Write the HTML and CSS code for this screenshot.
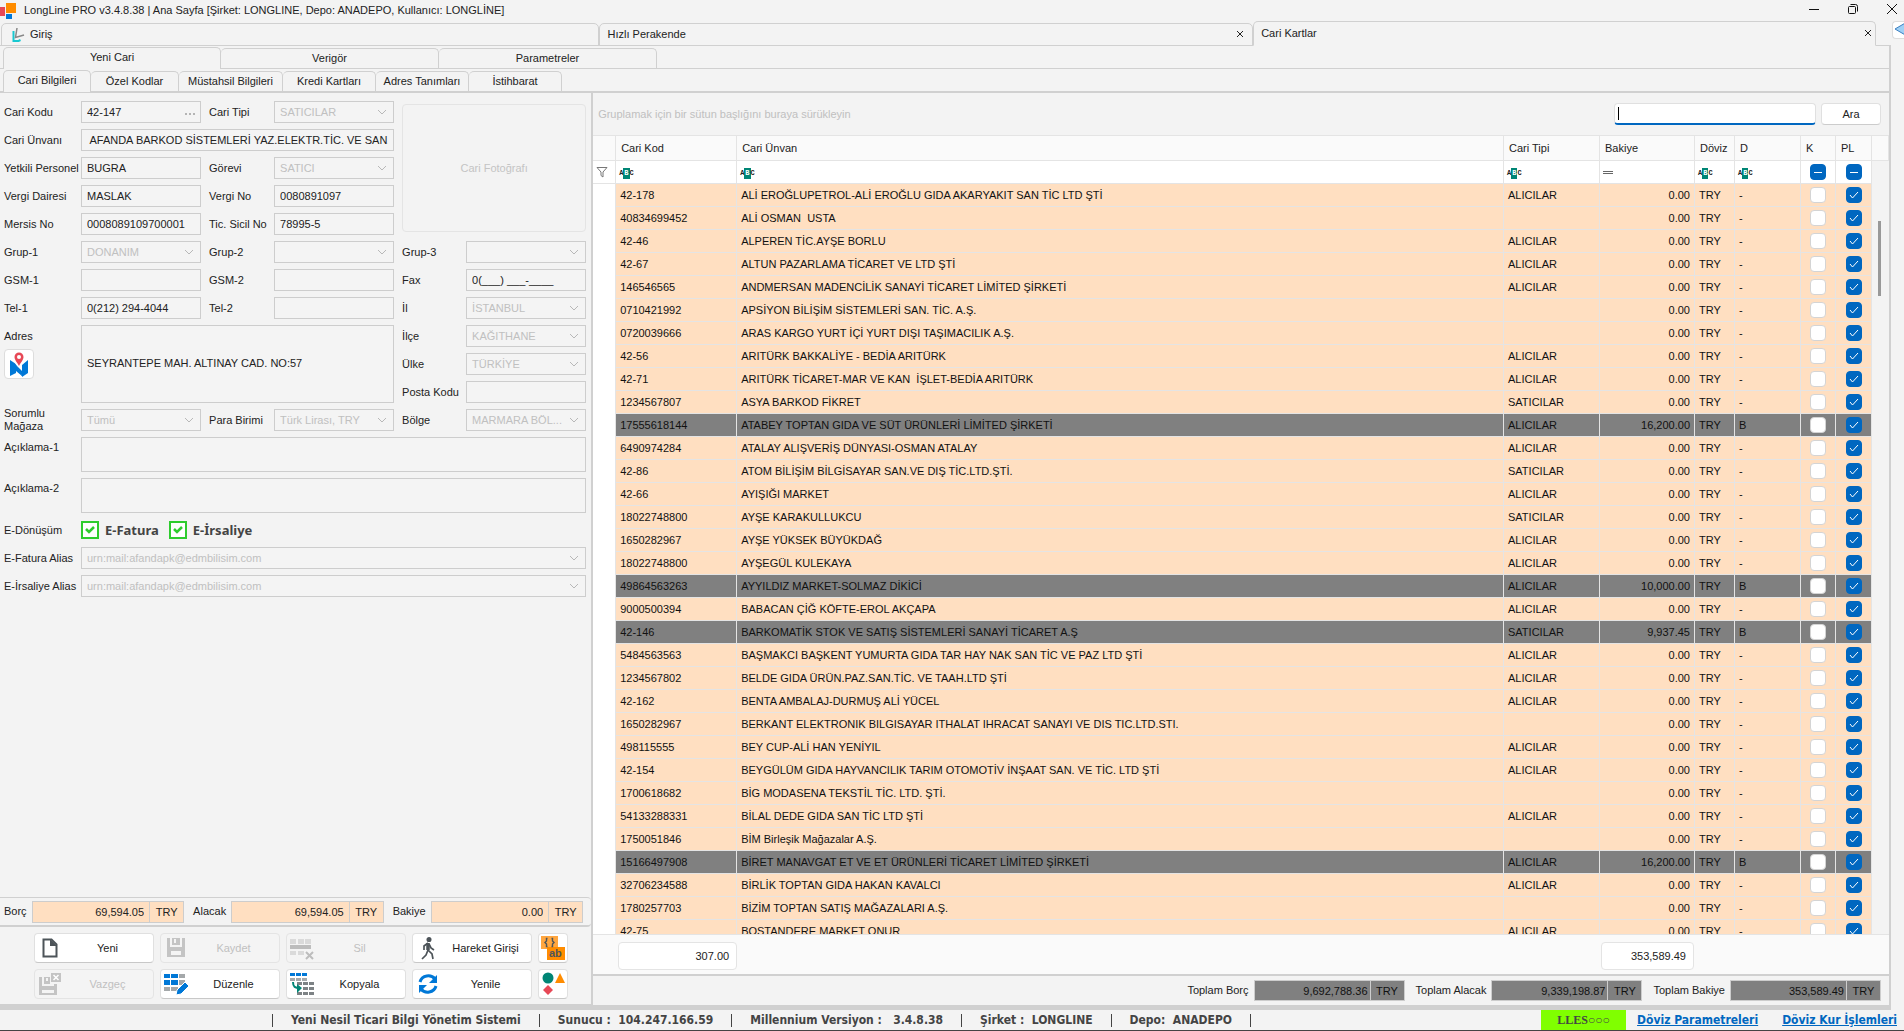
FILE: index.html
```html
<!DOCTYPE html>
<html lang="tr">
<head>
    <meta charset="UTF-8">
    <title>LongLine PRO</title>
    <link rel="stylesheet" href="styles.css">
</head>
<body>
<header class="titlebar">
    <svg class="app-logo" width="16" height="18" viewBox="0 0 16 18">
        <rect x="0" y="5" width="5" height="9" fill="#e74856"/>
        <rect x="6" y="1" width="10" height="10" fill="#ff8c00"/>
        <rect x="6" y="12" width="6" height="5" fill="#0078d7"/>
    </svg>
    <h1 class="app-title">LongLine PRO v3.4.8.38 | Ana Sayfa [Şirket: LONGLINE, Depo: ANADEPO, Kullanıcı: LONGLİNE]</h1>
    <button class="win-btn" aria-label="Simge durumuna küçült"><svg width="12" height="12" viewBox="0 0 12 12"><path d="M1 6.5h10" stroke="#111"/></svg></button>
    <button class="win-btn" aria-label="Önceki boyut"><svg width="12" height="12" viewBox="0 0 12 12" fill="none" stroke="#111"><rect x="1.5" y="3.5" width="7" height="7" rx="1"/><path d="M3.5 1.5h5a2 2 0 0 1 2 2v5"/></svg></button>
    <button class="win-btn" aria-label="Kapat"><svg width="12" height="12" viewBox="0 0 12 12"><path d="M1 1l10 10M11 1L1 11" stroke="#111"/></svg></button>
</header>

<nav class="doc-tabs">
    <div class="doc-tab doc-home">
        <svg width="13" height="15" viewBox="0 0 13 15" fill="none"><path d="M1.5 4v10h5l2-1" stroke="#18c8d0" stroke-width="2"/><path d="M5 1L3.500 10.500L12 8" stroke="#888" stroke-width="1.500"/></svg>
        <a href="#giris">Giriş</a>
    </div>
    <div class="doc-tab doc-retail">
        <a href="#perakende">Hızlı Perakende</a>
        <button class="close" aria-label="Hızlı Perakende kapat"><svg width="8" height="8" viewBox="0 0 8 8"><path d="M1 1l6 6M7 1L1 7" stroke="#222"/></svg></button>
    </div>
    <div class="doc-tab doc-cards active">
        <a href="#cari">Cari Kartlar</a>
        <button class="close" aria-label="Cari Kartlar kapat"><svg width="8" height="8" viewBox="0 0 8 8"><path d="M1 1l6 6M7 1L1 7" stroke="#222"/></svg></button>
    </div>
    <button class="scroll-btn" aria-label="Sekmeler"><svg width="14" height="14" viewBox="0 0 14 14"><path d="M2 7L14 0v14z" fill="#9fd0f5" stroke="#3b7fc0"/></svg></button>
</nav>

<main class="page">
    <nav class="tabs tabs-main">
        <a class="active" href="#yeni">Yeni Cari</a>
        <a href="#verigor">Verigör</a>
        <a href="#parametreler">Parametreler</a>
    </nav>
    <nav class="tabs tabs-sub">
        <a class="active" href="#bilgi">Cari Bilgileri</a>
        <a href="#ozel">Özel Kodlar</a>
        <a class="wide" href="#mustahsil">Müstahsil Bilgileri</a>
        <a href="#kredi">Kredi Kartları</a>
        <a href="#adres">Adres Tanımları</a>
        <a href="#istihbarat">İstihbarat</a>
    </nav>

    <div class="panes">
        <section class="card-pane">
            <form class="card-form">
                <div class="photo">Cari Fotoğrafı</div>

                <label for="kod">Cari Kodu</label>
                <div class="field-more">
                    <input id="kod" type="text" value="42-147">
                    <button type="button" aria-label="Cari seç"><svg width="11" height="3" viewBox="0 0 11 3" fill="#b4b4b4"><rect width="2" height="2" y="1"/><rect x="4" width="2" height="2" y="1"/><rect x="8" width="2" height="2" y="1"/></svg></button>
                </div>
                <label for="tip">Cari Tipi</label>
                <select id="tip" disabled><option>SATICILAR</option></select>

                <label for="unvan">Cari Ünvanı</label>
                <input id="unvan" class="span-3" type="text" value=" AFANDA BARKOD SİSTEMLERİ YAZ.ELEKTR.TİC. VE SAN.A.Ş.">

                <label for="personel">Yetkili Personel</label>
                <input id="personel" type="text" value="BUGRA">
                <label for="gorev">Görevi</label>
                <select id="gorev" disabled><option>SATICI</option></select>

                <label for="vdaire">Vergi Dairesi</label>
                <input id="vdaire" type="text" value="MASLAK">
                <label for="vno">Vergi No</label>
                <input id="vno" type="text" value="0080891097">

                <label for="mersis">Mersis No</label>
                <input id="mersis" type="text" value="0008089109700001">
                <label for="sicil">Tic. Sicil No</label>
                <input id="sicil" type="text" value="78995-5">

                <label for="grup1">Grup-1</label>
                <select id="grup1" disabled><option>DONANIM</option></select>
                <label for="grup2">Grup-2</label>
                <select id="grup2" disabled><option></option></select>
                <label for="grup3">Grup-3</label>
                <select id="grup3" disabled><option></option></select>

                <label for="gsm1">GSM-1</label>
                <input id="gsm1" type="text">
                <label for="gsm2">GSM-2</label>
                <input id="gsm2" type="text">
                <label for="fax">Fax</label>
                <input id="fax" type="text" value="0(___) ___-____">

                <label for="tel1">Tel-1</label>
                <input id="tel1" type="text" value="0(212) 294-4044">
                <label for="tel2">Tel-2</label>
                <input id="tel2" type="text">
                <label for="il">İl</label>
                <select id="il" disabled><option>İSTANBUL</option></select>

                <label for="adres">Adres</label>
                <textarea id="adres" class="address">SEYRANTEPE MAH. ALTINAY CAD. NO:57</textarea>
                <label for="ilce">İlçe</label>
                <select id="ilce" disabled><option>KAĞITHANE</option></select>

                <button type="button" class="map-btn" aria-label="Haritada göster">
                    <svg width="20" height="25" viewBox="0 0 20 25">
                        <path d="M1 8l6 4v9l-6 3zM7 12l6 11v1l-6-5zM13 13l6-5v13l-6 4z" fill="#0078d7"/>
                        <path d="M6 11l7 12V12z" fill="#fff"/><path d="M6 12l7 12v-5z" fill="#0078d7"/>
                        <path d="M10 14C8 10 5.500 8 5.500 5a4.500 4.500 0 0 1 9 0c0 3-2.500 5-4.500 9z" fill="#e74856"/>
                        <circle cx="10" cy="5" r="2" fill="#fff"/>
                    </svg>
                </button>
                <label class="third" for="ulke">Ülke</label>
                <select id="ulke" disabled><option>TÜRKİYE</option></select>

                <label class="third" for="posta">Posta Kodu</label>
                <input id="posta" type="text">

                <label for="magaza">Sorumlu<br>Mağaza</label>
                <select id="magaza" disabled><option>Tümü</option></select>
                <label for="para">Para Birimi</label>
                <select id="para" disabled><option>Türk Lirası, TRY</option></select>
                <label for="bolge">Bölge</label>
                <select id="bolge" disabled><option>MARMARA BÖL...</option></select>

                <label class="top" for="acik1">Açıklama-1</label>
                <textarea id="acik1" class="span-all"></textarea>
                <label class="top" for="acik2">Açıklama-2</label>
                <textarea id="acik2" class="span-all"></textarea>

                <span>E-Dönüşüm</span>
                <div class="span-all e-checks">
                    <label><input type="checkbox" checked> E-Fatura</label>
                    <label><input type="checkbox" checked> E-İrsaliye</label>
                </div>

                <label for="alias1">E-Fatura Alias</label>
                <select id="alias1" class="span-all" disabled><option>urn:mail:afandapk@edmbilisim.com</option></select>
                <label for="alias2">E-İrsaliye Alias</label>
                <select id="alias2" class="span-all" disabled><option>urn:mail:afandapk@edmbilisim.com</option></select>
            </form>

            <div class="balance">
                <label for="borc">Borç</label>
                <input id="borc" readonly value="69,594.05"><span class="cur">TRY</span>
                <label for="alacak">Alacak</label>
                <input id="alacak" readonly value="69,594.05"><span class="cur">TRY</span>
                <label for="bakiye">Bakiye</label>
                <input id="bakiye" readonly value="0.00"><span class="cur">TRY</span>
            </div>

            <div class="actions">
                <button><svg width="24" height="24" viewBox="0 0 24 24"><path d="M5.500 3.500h8l5 5v12h-13z" fill="none" stroke="#4d5459" stroke-width="2"/><path d="M12 3v7h7z" fill="#4d5459"/></svg><span>Yeni</span></button>
                <button disabled><svg width="24" height="24" viewBox="0 0 24 24" fill="#c4c4c4"><path d="M3 2h3v9h12V2h3v19H3zm4 13v4h10v-4z" fill-rule="evenodd"/><path d="M8 2h8v7H8zm2 1v4h2V3z" fill-rule="evenodd"/></svg><span>Kaydet</span></button>
                <button disabled><svg width="24" height="24" viewBox="0 0 24 24"><path d="M0 3h6v5H0zM8 3h6v5H8zM15 3h6v5h-6zM0 15h6v4H0zM8 15h6v4H8z" fill="#dadada"/><path d="M0 9h21v4H0z" fill="#bdbdbd"/><path d="M16 16l7 7M23 16l-7 7" stroke="#bdbdbd" stroke-width="2"/></svg><span>Sil</span></button>
                <button><svg width="24" height="24" viewBox="0 0 24 24" fill="none" stroke="#4d5459" stroke-width="1.700"><circle cx="13" cy="3.500" r="1.700" fill="#4d5459"/><path d="M12 7v7l4 4 1 5M12 14l-2 5-4 4"/><path d="M12 7l-4 3v4M13 8l2 4 3 2"/><path d="M12 7v7" stroke-width="3.500"/></svg><span>Hareket Girişi</span></button>
                <button class="square" aria-label="Metin ayarları"><svg width="26" height="26" viewBox="0 0 26 26"><rect x="1" y="1" width="17" height="13" fill="#ffa63f"/><rect x="7" y="12" width="18" height="13" fill="#ff8c00"/><path d="M7.500 3.500H6.500V6L5 7.500 6.500 9v2.500h1M11.500 3.500h1V6L14 7.500 12.500 9v2.500h-1" fill="none" stroke="#4d5459" stroke-width="1.400"/><text x="9" y="22" class="ab">ab</text></svg></button>
                <button disabled><svg width="24" height="24" viewBox="0 0 24 24" fill="#c4c4c4"><path d="M1 5h3v9h12v-2h3v11H1zm3 13v3h12v-3z" fill-rule="evenodd"/><path d="M6 5h6v7H6zm2 1v3h2V6z" fill-rule="evenodd"/><path d="M13 1h10v9H13z"/><path d="M15.500 3l5 5M20.500 3l-5 5" stroke="#fff" stroke-width="1.500"/></svg><span>Vazgeç</span></button>
                <button><svg width="24" height="24" viewBox="0 0 24 24"><path d="M0 2h6v4H0zM7 2h7v4H7zM0 8h6v5H0zM7 8h7v5H7z" fill="#0078d7"/><path d="M15 2h6v4h-6zM15 8h6v5h-6zM0 15h6v4H0zM7 15h7v4H7z" fill="#a4a8aa"/><path d="M12 23l1-5 8-8 4 4-8 8z" fill="#0078d7" stroke="#fff"/></svg><span>Düzenle</span></button>
                <button><svg width="24" height="24" viewBox="0 0 24 24"><path d="M0 1h5v3H0zM6 1h5v3H6zM12 1h5v3h-5z" fill="#0078d7"/><path d="M0 6h5v3H0zM6 6h5v3H6zM12 6h5v3h-5z" fill="#a4a8aa"/><path d="M7 10h5v3H7zM13 10h5v3h-5zM19 10h5v3h-5zM13 15h5v3h-5zM19 15h5v3h-5zM7 20h5v3H7zM13 20h5v3h-5zM19 20h5v3h-5z" fill="#7d8285"/><path d="M3 10c0 5 2 6 7 6" fill="none" stroke="#008575" stroke-width="2"/><path d="M7 12l5 4-5 5z" fill="#008575"/></svg><span>Kopyala</span></button>
                <button><svg width="24" height="24" viewBox="0 0 24 24" fill="none" stroke="#0078d7" stroke-width="3"><path d="M4 10c2-7 11-8 15-3M20 14c-2 7-11 8-15 3"/><path d="M21 3v8h-8zM3 21v-8h8z" fill="#0078d7" stroke="none"/></svg><span>Yenile</span></button>
                <button class="square" aria-label="Şekiller"><svg width="26" height="26" viewBox="0 0 26 26"><circle cx="8" cy="7" r="5.500" fill="#008575"/><path d="M20 2l5 10H15z" fill="#ff8c00"/><path d="M8 14l5 5-5 5-5-5z" fill="#e74856"/></svg></button>
            </div>
        </section>

        <section class="list-pane">
            <div class="group-bar">
                <span>Gruplamak için bir sütun başlığını buraya sürükleyin</span>
                <input class="search" type="text" aria-label="Ara">
                <button class="search-btn">Ara</button>
            </div>
            <div class="grid-wrap">
                <table class="grid">
                    <colgroup>
                        <col class="c-ind"><col class="c-kod"><col><col class="c-tip"><col class="c-bakiye">
                        <col class="c-doviz"><col class="c-d"><col class="c-k"><col class="c-pl"><col class="c-bar">
                    </colgroup>
                    <thead>
                    <tr class="heads">
                        <th></th><th>Cari Kod</th><th>Cari Ünvan</th><th>Cari Tipi</th><th>Bakiye</th>
                        <th>Döviz</th><th>D</th><th>K</th><th>PL</th><th></th>
                    </tr>
                    <tr class="filters">
                        <td class="funnel"><svg width="12" height="12" viewBox="0 0 12 12"><path d="M1 1.500h10L7 6v5L5 9.500V6z" fill="none" stroke="#777"/></svg></td>
                        <td><span class="abc">A<b>B</b>C</span></td>
                        <td><span class="abc">A<b>B</b>C</span></td>
                        <td><span class="abc">A<b>B</b>C</span></td>
                        <td><svg class="equals" width="10" height="5" viewBox="0 0 10 5"><path d="M0 1.500h10M0 3.500h10" stroke="#666"/></svg></td>
                        <td><span class="abc">A<b>B</b>C</span></td>
                        <td><span class="abc">A<b>B</b>C</span></td>
                        <td class="chk"><input class="mixed" type="checkbox" aria-label="K filtresi"></td>
                        <td class="chk"><input class="mixed" type="checkbox" aria-label="PL filtresi"></td>
                        <td class="bar"></td>
                    </tr>
                    </thead>
                    <tbody id="rows"></tbody>
                </table>
                <div class="scroll-thumb"></div>
            </div>
            <div class="summary">
                <output class="sum-count">307.00</output>
                <output class="sum-balance">353,589.49</output>
            </div>
            <div class="totals">
                <label for="tborc">Toplam Borç</label>
                <input id="tborc" readonly value="9,692,788.36"><span class="cur">TRY</span>
                <label for="talacak">Toplam Alacak</label>
                <input id="talacak" readonly value="9,339,198.87"><span class="cur">TRY</span>
                <label for="tbakiye">Toplam Bakiye</label>
                <input id="tbakiye" readonly value="353,589.49"><span class="cur">TRY</span>
            </div>
        </section>
    </div>
</main>

<footer class="status">
    <i></i><span>Yeni Nesil Ticari Bilgi Yönetim Sistemi</span>
    <i></i><span>Sunucu :&nbsp; 104.247.166.59</span>
    <i></i><span>Millennium Versiyon :&nbsp;&nbsp; 3.4.8.38</span>
    <i></i><span>Şirket :&nbsp; LONGLINE</span>
    <i></i><span>Depo:&nbsp; ANADEPO</span>
    <i></i>
    <strong class="lles">LLES○○○</strong>
    <a href="#doviz">Döviz Parametreleri</a>
    <a href="#kur">Döviz Kur İşlemleri</a>
</footer>
<script src="script.js"></script>
</body>
</html>
```

FILE: styles.css
```css
* {
    box-sizing: border-box;
}

body {
    margin: 0;
    height: 100vh;
    display: flex;
    flex-direction: column;
    overflow: hidden;
    background-color: #f3f3f3;
    border-bottom: 1px solid #444;
    color: #222;
    font: 11px/13px "Liberation Sans", Arial, sans-serif;
}

input, select, textarea, button {
    font: inherit;
    color: inherit;
    margin: 0;
}

button {
    padding: 0;
    border: 0;
    background: none;
}

a {
    color: inherit;
    text-decoration: none;
}

/* title bar */
.titlebar {
    display: flex;
    align-items: center;
    height: 21px;
}

.app-title {
    flex: 1;
    margin: 0 0 0 8px;
    font-size: 11px;
    font-weight: normal;
}

.win-btn {
    width: 42px;
    height: 20px;
    text-align: center;
}

.win-btn:first-of-type {
    margin-right: -3px;
}

.win-btn:last-child {
    width: 36px;
    margin-right: -6px;
}

/* document tabs */
.doc-tabs {
    display: flex;
    align-items: flex-end;
    height: 25px;
    padding-left: 1px;
    position: relative;
}

.doc-tab {
    display: flex;
    align-items: center;
    justify-content: space-between;
    height: 23px;
    padding: 0 8px 0 10px;
    border: 1px solid #d0d0d0;
    border-radius: 5px 5px 0 0;
}

.doc-tab.active {
    height: 25px;
    border-bottom-color: #f3f3f3;
}

.doc-home {
    flex: 0 0 31.4%;
    justify-content: flex-start;
    gap: 5px;
}

.doc-retail {
    flex: 0 0 34.4%;
    padding-left: 8px;
}

.doc-cards {
    flex: 1;
    padding: 0 7px;
    margin-right: 16px;
}

.doc-cards .close {
    margin-right: -4px;
}

.close {
    width: 9px;
    height: 14px;
}

.scroll-btn {
    width: 12px;
    height: 18px;
    margin-bottom: 7px;
    overflow: hidden;
    background-color: #fff;
    border: 1px solid #ddd;
    border-right: 0;
    border-radius: 4px 0 0 4px;
}

/* page and inner tabs */
.page {
    flex: 1;
    min-height: 0;
    display: flex;
    flex-direction: column;
    margin-right: 13px;
    border-top: 1px solid #d0d0d0;
    border-right: 2px solid #d0d0d0;
    margin-top: -1px;
}

.tabs {
    display: flex;
    align-items: flex-end;
    padding-left: 3px;
    border-bottom: 1px solid #d0d0d0;
    height: 23px;
}

.tabs a {
    height: 20px;
    line-height: 18px;
    border: 1px solid #d0d0d0;
    border-left-width: 0;
    border-bottom: 0;
    border-radius: 5px 5px 0 0;
    text-align: center;
}

.tabs a.active {
    height: 22px;
    border-left-width: 1px;
    background-color: #f3f3f3;
    margin-bottom: -1px;
}

.tabs-main a {
    flex: 0 0 218px;
}

.tabs-sub {
    border-bottom-width: 2px;
    height: 24px;
}

.tabs-sub a {
    flex: 0 0 93px;
}

.tabs-sub a:first-child, .tabs-sub a:nth-child(2) {
    flex-basis: 88px;
}

.tabs-sub a.wide {
    flex-basis: 104px;
}

.panes {
    flex: 1;
    min-height: 0;
    display: flex;
    border-bottom: 5px solid #d0d0d0;
}

/* customer card */
.card-pane {
    flex: 0 0 31.4%;
    min-width: 0;
    display: flex;
    flex-direction: column;
    border-right: 2px solid #d0d0d0;
}

.card-form {
    flex: 1;
    display: grid;
    grid-template-columns: 69px minmax(0, 1fr) 57px minmax(0, 1fr) 56px minmax(0, 1fr);
    grid-template-rows: repeat(12, 22px) 35px 35px repeat(3, 22px);
    gap: 6px 8px;
    align-items: center;
    align-content: start;
    padding: 8px 5px 0 4px;
}

.card-form > label, .card-form > span {
    white-space: nowrap;
}

.card-form input[type=text], .card-form select, .card-form textarea {
    width: 100%;
    min-width: 0;
    height: 22px;
    padding: 0 5px;
    background-color: #f4f4f4;
    border: 1px solid #cdcdcd;
    border-radius: 0;
    outline: 0;
}

.card-form select {
    appearance: none;
    padding-right: 22px;
    color: #c0c0c0;
    opacity: 1;
    text-overflow: ellipsis;
    background-image: url("data:image/svg+xml,%3Csvg xmlns='http://www.w3.org/2000/svg' width='10' height='6'%3E%3Cpath d='M1 1l4 4 4-4' fill='none' stroke='%23b8b8b8'/%3E%3C/svg%3E");
    background-repeat: no-repeat;
    background-position: right 6px center;
}

.card-form textarea {
    display: block;
    height: 100%;
    resize: none;
}

.card-form .address {
    grid-column: span 3;
    grid-row: span 3;
    padding-top: 31px;
}

.span-3 {
    grid-column: span 3;
}

.span-all {
    grid-column: span 5;
}

.third {
    grid-column: 5;
}

.card-form .top {
    align-self: start;
    padding-top: 4px;
}

.photo {
    grid-column: 5 / 7;
    grid-row: 1 / 6;
    height: 128px;
    display: flex;
    align-items: center;
    justify-content: center;
    border: 1px solid #e4e4e4;
    border-radius: 4px;
    color: #c4c4c4;
}

.field-more {
    position: relative;
}

.field-more button {
    position: absolute;
    right: 5px;
    top: 0;
    height: 20px;
}

.map-btn {
    width: 30px;
    height: 30px;
    background-color: #fff;
    border: 1px solid #ddd;
    border-radius: 4px;
}

.map-btn svg {
    display: block;
    margin: 1px auto;
}

.e-checks {
    display: flex;
    gap: 10px;
    color: #444;
    font: bold 13px/18px "Noto Sans", sans-serif;
}

.e-checks label {
    display: flex;
    align-items: center;
    gap: 6px;
}

.e-checks input {
    appearance: none;
    width: 18px;
    height: 18px;
    border: 2px solid #2ecc2e;
    background: #fff url("data:image/svg+xml,%3Csvg xmlns='http://www.w3.org/2000/svg' width='10' height='8'%3E%3Cpath d='M1 3l3 3 5-5' fill='none' stroke='%232ecc2e' stroke-width='2.500'/%3E%3C/svg%3E") center no-repeat;
}

.balance, .totals {
    display: flex;
    align-items: center;
}

.balance {
    height: 30px;
    padding: 0 8px 0 4px;
    border-top: 1px solid #d0d0d0;
    border-bottom: 2px solid #d0d0d0;
    border-radius: 0 4px 4px 0;
}

.balance label, .totals label {
    margin: 0 5px 0 9px;
    white-space: nowrap;
}

.balance label:first-child {
    margin-left: 0;
}

.balance input, .totals input {
    flex: 1;
    min-width: 0;
    height: 22px;
    padding: 0 5px;
    border: 1px solid #cdcdcd;
    background-color: #ffdfc1;
    text-align: right;
    outline: 0;
}

.cur {
    width: 34px;
    height: 22px;
    line-height: 20px;
    border: 1px solid #cdcdcd;
    border-left: 0;
    background-color: #ffdfc1;
    text-align: center;
}

.actions {
    display: grid;
    grid-template-columns: repeat(4, 120px) 30px;
    gap: 6px;
    padding: 6px 0 5px 34px;
    border-bottom: 1px solid #d0d0d0;
}

.actions button {
    display: flex;
    align-items: center;
    height: 30px;
    padding-left: 2px;
    background-color: #fff;
    border: 1px solid #e0e0e0;
    border-bottom-color: #c8c8c8;
    border-radius: 4px;
}

.actions button:disabled {
    background-color: #f4f4f4;
    border-color: #e4e4e4;
    color: #c0c0c0;
}

.actions svg {
    flex: none;
    margin-left: 1px;
}

.actions button span {
    flex: 1;
    text-align: center;
}

.actions .square {
    padding: 0;
}

.ab {
    font: bold 11px "Liberation Sans", Arial, sans-serif;
    fill: #4d5459;
}

/* customer list */
.list-pane {
    flex: 1;
    min-width: 0;
    display: flex;
    flex-direction: column;
}

.group-bar {
    display: flex;
    align-items: center;
    gap: 5px;
    height: 42px;
    padding: 0 8px 0 5px;
}

.group-bar span {
    flex: 1;
    color: #c0c0c0;
}

.search {
    width: 202px;
    height: 22px;
    border: 1px solid #e0e0e0;
    border-bottom: 2px solid #0067c0;
    border-radius: 4px;
    background: #fff linear-gradient(#000, #000) 3px 3px / 1px 13px no-repeat;
    outline: 0;
}

.search-btn {
    width: 60px;
    height: 22px;
    background-color: #fff;
    border: 1px solid #e0e0e0;
    border-bottom-color: #ccc;
    border-radius: 4px;
}

.grid-wrap {
    flex: 1;
    min-height: 0;
    overflow: hidden;
    position: relative;
}

.grid {
    width: 100%;
    table-layout: fixed;
    border-collapse: separate;
    border-spacing: 0;
}

.c-ind { width: 23px; }
.c-kod { width: 121px; }
.c-tip { width: 96px; }
.c-bakiye { width: 95px; }
.c-doviz { width: 40px; }
.c-d { width: 66px; }
.c-k { width: 35px; }
.c-pl { width: 36px; }
.c-bar { width: 17px; }

.grid th, .grid td {
    padding: 0 4px;
    border-right: 1px solid #e4e4e4;
    border-bottom: 1px solid #e4e4e4;
    white-space: pre;
    text-align: left;
    font-weight: normal;
}

.grid th {
    height: 26px;
    padding-left: 5px;
    border-top: 1px solid #e4e4e4;
    background-color: #fafafa;
}

.grid td {
    height: 23px;
}

.grid .filters td {
    background-color: #fff;
    padding-left: 3px;
}

.grid tbody td {
    background-color: #ffdfc1;
    color: #111;
}

.grid tbody .debt td {
    background-color: #808080;
}

.grid tbody tr .ind {
    background-color: #fff;
    border-bottom: 0;
}

.grid tbody tr .bar, .grid .filters .bar {
    background-color: #f3f3f3;
    border: 0;
}

.grid .num {
    text-align: right;
}

.grid .funnel {
    padding-left: 5px;
}

.grid .funnel svg, .grid .equals {
    display: block;
}

.grid .chk, .grid .filters .chk {
    padding: 0;
    text-align: center;
}

.chk input {
    appearance: none;
    display: block;
    width: 16px;
    height: 16px;
    margin: 0 auto;
    background-color: #fff;
    border: 1px solid #d4d4d4;
    border-radius: 4px;
}

.chk input:checked, .chk .mixed {
    border-color: #0067c0;
    background: #0067c0 url("data:image/svg+xml,%3Csvg xmlns='http://www.w3.org/2000/svg' width='10' height='8'%3E%3Cpath d='M1 4l2.500 3L9 1' fill='none' stroke='white'/%3E%3C/svg%3E") center no-repeat;
}

.chk .mixed {
    background-image: linear-gradient(#fff, #fff);
    background-size: 8px 1px;
}

.abc {
    display: inline-flex;
    align-items: center;
    height: 11px;
    font: bold 7px/11px "Liberation Mono", monospace;
}

.abc b {
    padding: 0 1px;
    background-color: #008575;
    color: #fff;
}

.scroll-thumb {
    position: absolute;
    right: 8px;
    top: 86px;
    width: 3px;
    height: 75px;
    background-color: #999;
}

.summary {
    display: flex;
    justify-content: space-between;
    height: 42px;
    padding: 7px 195px 0 25px;
    background-color: #fafafa;
    border-top: 1px solid #e4e4e4;
    border-bottom: 2px solid #d0d0d0;
}

.summary output {
    width: 119px;
    height: 28px;
    padding-right: 7px;
    line-height: 26px;
    background-color: #fff;
    border: 1px solid #e4e4e4;
    border-radius: 4px;
    text-align: right;
}

.summary .sum-balance {
    width: 93px;
}

.totals {
    justify-content: flex-end;
    height: 29px;
    padding-right: 8px;
}

.totals input, .totals .cur {
    background-color: #808080;
    color: #111;
    height: 21px;
}

.totals input {
    flex: none;
    width: 117px;
    padding: 0 2px;
}

.totals label {
    margin-left: 11px;
}

/* status bar */
.status {
    display: flex;
    align-items: center;
    height: 20px;
    padding: 0 7px 0 272px;
    color: #444;
    font: bold 12px/14px "DejaVu Sans Condensed", "Noto Sans", sans-serif;
    white-space: nowrap;
}

.status i {
    width: 1px;
    height: 13px;
    margin-right: 18px;
    background-color: #444;
}

.status span {
    margin-right: 18px;
}

.status .lles {
    width: 85px;
    height: 20px;
    margin-left: auto;
    line-height: 20px;
    background-color: #80ff00;
    text-align: center;
    font-family: "Liberation Serif", serif;
}

.status a {
    margin-left: 11px;
    color: #0067c0;
    text-decoration: underline;
}

.status a:last-child {
    margin-left: 24px;
}
```

FILE: script.js
```js
// kod, ünvan, tip (A: alıcı, S: satıcı), bakiye
var rows = [
    ["42-178", "ALİ EROĞLUPETROL-ALİ EROĞLU GIDA AKARYAKIT SAN TİC LTD ŞTİ", "A"],
    ["40834699452", "ALİ OSMAN  USTA", ""],
    ["42-46", "ALPEREN TİC.AYŞE BORLU", "A"],
    ["42-67", "ALTUN PAZARLAMA TİCARET VE LTD ŞTİ", "A"],
    ["146546565", "ANDMERSAN MADENCİLİK SANAYİ TİCARET LİMİTED ŞİRKETİ", "A"],
    ["0710421992", "APSİYON BİLİŞİM SİSTEMLERİ SAN. TİC. A.Ş.", ""],
    ["0720039666", "ARAS KARGO YURT İÇİ YURT DIŞI TAŞIMACILIK A.Ş.", ""],
    ["42-56", "ARITÜRK BAKKALİYE - BEDİA ARITÜRK", "A"],
    ["42-71", "ARITÜRK TİCARET-MAR VE KAN  İŞLET-BEDİA ARITÜRK", "A"],
    ["1234567807", "ASYA BARKOD FİKRET", "S"],
    ["17555618144", "ATABEY TOPTAN GIDA VE SÜT ÜRÜNLERİ LİMİTED ŞİRKETİ", "A", "16,200.00"],
    ["6490974284", "ATALAY ALIŞVERİŞ DÜNYASI-OSMAN ATALAY", "A"],
    ["42-86", "ATOM BİLİŞİM BİLGİSAYAR SAN.VE DIŞ TİC.LTD.ŞTİ.", "S"],
    ["42-66", "AYIŞIĞI MARKET", "A"],
    ["18022748800", "AYŞE KARAKULLUKCU", "S"],
    ["1650282967", "AYŞE YÜKSEK BÜYÜKDAĞ", "A"],
    ["18022748800", "AYŞEGÜL KULEKAYA", "A"],
    ["49864563263", "AYYILDIZ MARKET-SOLMAZ DİKİCİ", "A", "10,000.00"],
    ["9000500394", "BABACAN ÇİĞ KÖFTE-EROL AKÇAPA", "A"],
    ["42-146", "BARKOMATİK STOK VE SATIŞ SİSTEMLERİ SANAYİ TİCARET A.Ş", "S", "9,937.45"],
    ["5484563563", "BAŞMAKCI BAŞKENT YUMURTA GIDA TAR HAY NAK SAN TİC VE PAZ LTD ŞTİ", "A"],
    ["1234567802", "BELDE GIDA ÜRÜN.PAZ.SAN.TİC. VE TAAH.LTD ŞTİ", "A"],
    ["42-162", "BENTA AMBALAJ-DURMUŞ ALİ YÜCEL", "A"],
    ["1650282967", "BERKANT ELEKTRONIK BILGISAYAR ITHALAT IHRACAT SANAYI VE DIS TIC.LTD.STI.", ""],
    ["498115555", "BEY CUP-ALİ HAN YENİYIL", "A"],
    ["42-154", "BEYGÜLÜM GIDA HAYVANCILIK TARIM OTOMOTİV İNŞAAT SAN. VE TİC. LTD ŞTİ", "A"],
    ["1700618682", "BİG MODASENA TEKSTİL TİC. LTD. ŞTİ.", ""],
    ["54133288331", "BİLAL DEDE GIDA SAN TİC LTD ŞTİ", "A"],
    ["1750051846", "BİM Birleşik Mağazalar A.Ş.", ""],
    ["15166497908", "BİRET MANAVGAT ET VE ET ÜRÜNLERİ TİCARET LİMİTED ŞİRKETİ", "A", "16,200.00"],
    ["32706234588", "BİRLİK TOPTAN GIDA HAKAN KAVALCI", "A"],
    ["1780257703", "BİZİM TOPTAN SATIŞ MAĞAZALARI A.Ş.", ""],
    ["42-75", "BOSTANDERE MARKET ONUR", "A"]
];

var types = {A: "ALICILAR", S: "SATICILAR"};

document.getElementById("rows").innerHTML = rows.map(function (row) {
    var balance = row[3];

    return "<tr" + (balance ? " class='debt'" : "") + ">" +
        "<td class='ind'></td>" +
        "<td>" + row[0] + "</td>" +
        "<td>" + row[1] + "</td>" +
        "<td>" + (types[row[2]] || "") + "</td>" +
        "<td class='num'>" + (balance || "0.00") + "</td>" +
        "<td>TRY</td>" +
        "<td>" + (balance ? "B" : "-") + "</td>" +
        "<td class='chk'><input type='checkbox' aria-label='K'></td>" +
        "<td class='chk'><input type='checkbox' aria-label='PL' checked></td>" +
        "<td class='bar'></td>" +
        "</tr>";
}).join("");
```
